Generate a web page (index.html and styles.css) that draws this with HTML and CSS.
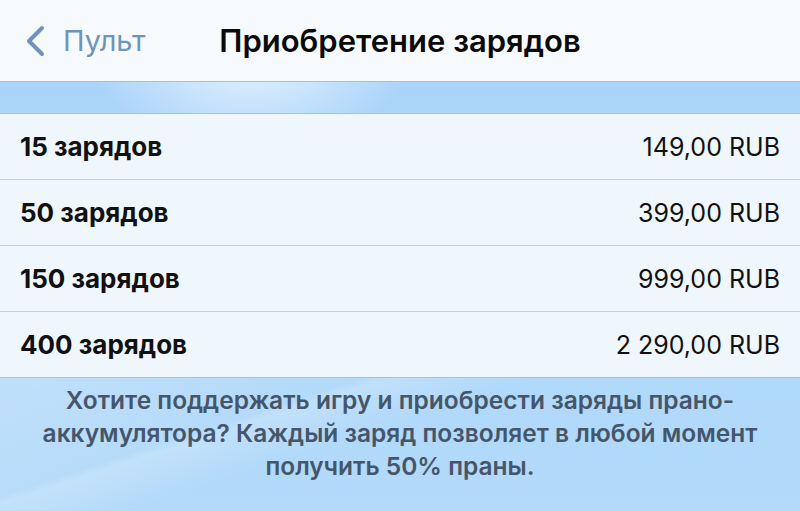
FILE: index.html
```html
<!DOCTYPE html>
<html lang="ru">
<head>
    <meta charset="UTF-8">
    <meta name="viewport" content="width=device-width, initial-scale=1.0">
    <title>Приобретение зарядов</title>
    <link rel="stylesheet" href="styles.css">
</head>
<body>
    <div class="screen">
        <div class="navbar">
            <a class="back" href="#">
                <svg class="chevron" width="22" height="32" viewBox="0 0 22 32">
                    <path d="M18 3 L5 16 L18 29" fill="none" stroke="currentColor" stroke-width="4" stroke-linecap="round" stroke-linejoin="round"/>
                </svg>
                <span>Пульт</span>
            </a>
            <div class="title">Приобретение зарядов</div>
            <div></div>
        </div>

        <div class="spacer"></div>

        <ul class="products">
            <li class="product">
                <span class="name">15 зарядов</span>
                <span class="price">149,00 RUB</span>
            </li>
            <li class="product">
                <span class="name">50 зарядов</span>
                <span class="price">399,00 RUB</span>
            </li>
            <li class="product">
                <span class="name">150 зарядов</span>
                <span class="price">999,00 RUB</span>
            </li>
            <li class="product">
                <span class="name">400 зарядов</span>
                <span class="price">2 290,00 RUB</span>
            </li>
        </ul>

        <div class="footer">
            Хотите поддержать игру и приобрести заряды прано-<br>аккумулятора? Каждый заряд позволяет в любой момент<br>получить 50% праны.
        </div>
    </div>
</body>
</html>
```

FILE: styles.css
```css
body {
    margin: 0;
    font-family: Inter, "Noto Sans", sans-serif;
    color: #111;
}

.screen {
    width: 800px;
    height: 511px;
    display: flex;
    flex-direction: column;
    overflow: hidden;
    background:
        radial-gradient(ellipse 160px 90px at 250px 60px, rgba(255, 255, 255, 0.7), transparent),
        linear-gradient(180deg, #a9d3f9 0%, #b3daf9 100%);
}

.navbar {
    height: 81px;
    display: grid;
    grid-template-columns: 1fr auto 1fr;
    align-items: center;
    background: #f6fafd;
    border-bottom: 1px solid #a9bfd0;
}

.back {
    display: flex;
    align-items: center;
    gap: 17px;
    padding-left: 24px;
    color: #6f93bd;
    text-decoration: none;
    font-size: 29px;
}

.chevron {
    margin-top: 1px;
}

.title {
    font-size: 31px;
    font-weight: 600;
    color: #0a0a0a;
}

.spacer {
    height: 31px;
    border-bottom: 1px solid #a8c3d8;
}

.products {
    list-style: none;
    margin: 0;
    padding: 0;
    background: #eff6fc;
}

.product {
    height: 65px;
    display: flex;
    align-items: center;
    justify-content: space-between;
    padding: 0 20px;
    border-bottom: 1px solid #bfd0dc;
    font-size: 25px;
}

.product:last-child {
    border-bottom-color: #9cc3e2;
}

.name {
    font-size: 26px;
    font-weight: 700;
}

.price {
    color: #111;
}

.footer {
    flex: 1;
    padding-top: 6px;
    text-align: center;
    font-size: 24.5px;
    font-weight: 600;
    line-height: 33px;
    color: #45566a;
    background:
        linear-gradient(162deg, transparent 30%, rgba(255, 255, 255, 0.18) 32%, transparent 45%),
        linear-gradient(160deg, rgba(255, 255, 255, 0.2), transparent 40%);
}
```
